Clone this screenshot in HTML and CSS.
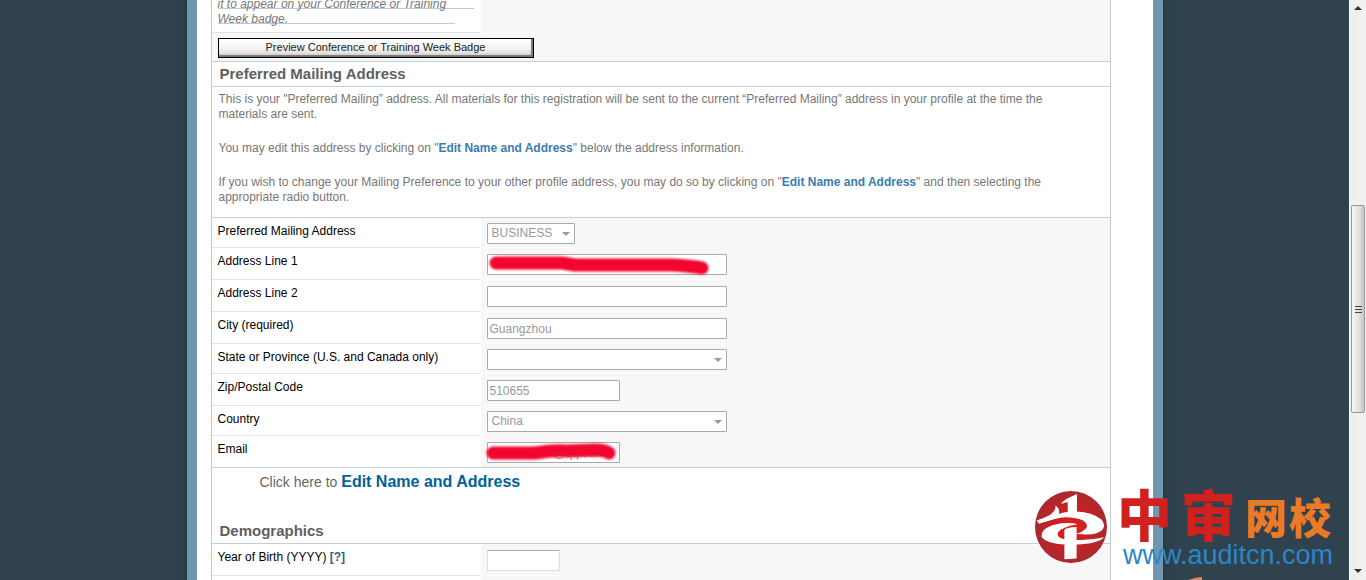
FILE: index.html
```html
<!DOCTYPE html>
<html lang="en">
<head>
<meta charset="utf-8">
<title>Conference Registration</title>
<link rel="stylesheet" href="styles.css">
</head>
<body>
<div class="viewport">
  <div class="backdrop">
    <main class="frame">
      <table class="form">
        <colgroup><col class="col-label"><col></colgroup>
        <tbody>
          <tr>
            <td class="label note"><em class="note-line note-first">it to appear on your Conference or Training</em><em class="note-line note-short">Week badge.</em></td>
            <td class="field"></td>
          </tr>
          <tr><td class="action" colspan="2"><button class="preview" type="button">Preview Conference or Training Week Badge</button></td></tr>
          <tr><th class="section" colspan="2">Preferred Mailing Address</th></tr>
          <tr>
            <td class="intro" colspan="2">
              <p>This is your "Preferred Mailing” address. All materials for this registration will be sent to the current “Preferred Mailing” address in your profile at the time the materials are sent.</p>
              <p>You may edit this address by clicking on "<a href="#edit">Edit Name and Address</a>" below the address information.</p>
              <p>If you wish to change your Mailing Preference to your other profile address, you may do so by clicking on "<a href="#edit">Edit Name and Address</a>" and then selecting the appropriate radio button.</p>
            </td>
          </tr>
          <tr>
            <td class="label"><label for="pref">Preferred Mailing Address</label></td>
            <td class="field has-select"><div class="pick pick-small"><select id="pref" disabled><option>BUSINESS</option></select></div></td>
          </tr>
          <tr>
            <td class="label"><label for="line1">Address Line 1</label></td>
            <td class="field"><div class="masked"><input class="box wide" id="line1" type="text" disabled>
              <svg class="marker" width="240" height="30" viewBox="0 0 240 30" aria-hidden="true"><path d="M9 13H75Q82 14 88 15H185Q204 16 215 18"/></svg></div></td>
          </tr>
          <tr>
            <td class="label"><label for="line2">Address Line 2</label></td>
            <td class="field"><input class="box wide" id="line2" type="text" disabled></td>
          </tr>
          <tr>
            <td class="label"><label for="city">City (required)</label></td>
            <td class="field"><input class="box wide" id="city" type="text" value="Guangzhou" disabled></td>
          </tr>
          <tr>
            <td class="label"><label for="state">State or Province (U.S. and Canada only)</label></td>
            <td class="field has-select"><div class="pick"><select id="state" disabled><option></option></select></div></td>
          </tr>
          <tr>
            <td class="label"><label for="zip">Zip/Postal Code</label></td>
            <td class="field"><input class="box medium" id="zip" type="text" value="510655" disabled></td>
          </tr>
          <tr>
            <td class="label"><label for="country">Country</label></td>
            <td class="field has-select"><div class="pick"><select id="country" disabled><option>China</option></select></div></td>
          </tr>
          <tr>
            <td class="label last"><label for="email">Email</label></td>
            <td class="field last"><div class="masked"><input class="box medium email" id="email" type="text" value="@qq.com" disabled>
              <svg class="marker" width="140" height="30" viewBox="0 0 140 30" aria-hidden="true"><path d="M6 15H48Q66 12 80 13L108 12Q118 12 122 15"/></svg></div></td>
          </tr>
          <tr>
            <td class="edit" colspan="2">Click here to <a href="#edit">Edit Name and Address</a></td>
          </tr>
          <tr><th class="section" colspan="2">Demographics</th></tr>
          <tr>
            <td class="label"><label for="birth">Year of Birth (YYYY)</label> <a class="help" href="#help">[?]</a></td>
            <td class="field"><input class="box year" id="birth" type="text"></td>
          </tr>
          <tr><td class="label">&nbsp;</td><td class="field"></td></tr>
        </tbody>
      </table>
    </main>
  </div>
  <div class="scrollbar" aria-hidden="true">
    <svg class="arrow" width="8" height="5" viewBox="0 0 8 5"><path d="M4 0L8 4H0Z"/></svg>
    <div class="thumb"><i></i><i></i><i></i></div>
    <svg class="arrow arrow-down" width="8" height="5" viewBox="0 0 8 5"><path d="M4 4L0 0H8Z"/></svg>
  </div>
  <div class="brand">
    <svg class="emblem" width="74" height="74" viewBox="29 15 222 224" aria-hidden="true">
      <defs><radialGradient id="disc"><stop offset="0" stop-color="#dc2020"/><stop offset=".55" stop-color="#c72024"/><stop offset="1" stop-color="#a82a2e"/></radialGradient></defs>
      <circle cx="140" cy="127" r="109" fill="url(#disc)"/>
      <g fill="#fff">
        <path d="M112 53Q124 41 138 36L158 27V86L130 88V52Q120 52 112 57Z"/>
        <path d="M36 107Q68 97 81 87Q94 78 93 62Q108 73 103 88Q122 79 155 80Q205 82 232 104Q247 120 234 137Q214 153 176 149Q158 147 142 151Q181 143 188 127Q190 111 165 103Q124 92 91 103L43 117Z"/>
        <path d="M160 119Q115 126 101 143Q92 157 120 164V135Q130 128 157 127V166Q195 168 241 158Q221 178 157 180V222L120 225V180Q66 177 51 157Q48 126 111 116Q139 112 160 119Z"/>
      </g>
    </svg>
    <div class="brand-text">
      <div class="brand-name"><span class="big">中</span><span class="big">审</span><span class="small">网</span><span class="small">校</span></div>
      <div class="brand-url">www.auditcn.com</div>
    </div>
    <svg class="speck" width="16" height="3" viewBox="0 0 16 3" aria-hidden="true"><path d="M0 3Q9 0 14 0V3Z" fill="#e28a68"/></svg>
  </div>
</div>
</body>
</html>
```
FILE: styles.css
```css
* { box-sizing: border-box; }

body {
  margin: 0;
  font-family: "Liberation Sans", Arial, sans-serif;
  font-size: 12px;
  color: #000;
}

a { color: #3a7cb0; font-weight: bold; text-decoration: none; }

.viewport {
  position: relative;
  display: flex;
  height: 100vh;
  overflow: hidden;
}

.backdrop {
  flex: 1;
  display: flex;
  justify-content: center;
  align-items: flex-start;
  background: #2f424e;
  border-right: 1px solid #fff;
}

.frame {
  flex: 0 1 976px;
  padding: 0 42px 0 14px;
  background: #fff;
  border: solid #7097b0;
  border-width: 0 10px;
  box-shadow: 0 0 8px #22323c;
}

.form {
  width: 100%;
  table-layout: fixed;
  border-collapse: separate;
  border-spacing: 0;
  border: solid #c3c8cc;
  border-width: 0 1px;
}

.col-label { width: 269px; }

td, th { padding: 0; vertical-align: top; text-align: left; }

.label {
  padding: 5px 6px;
  line-height: 16px;
  border-bottom: 1px solid #e2e4e6;
  border-right: 1px solid #fff;
}

.field {
  padding: 6px 6px 4px;
  background: #f7f7f7;
  border-bottom: 1px solid #fdfdfd;
}

.has-select { padding: 5px 6px 3px; }

.note { padding: 0 6px 5px; color: #777; border-bottom-color: #e2e4e6; }

.note-line {
  display: block;
  width: 256px;
  height: 15px;
  line-height: 14px;
  background: linear-gradient(#b9ccd8, #b9ccd8) 0 11px / 100% 1px no-repeat;
}

.note-first { margin-top: -3px; }
.note-short { width: 237px; }

.action {
  padding: 5px 6px 3px;
  background: #f7f7f7;
  border-bottom: 1px solid #c2d0d8;
}

.preview {
  display: block;
  width: 316px;
  height: 20px;
  padding: 0 0 2px;
  font: 11px/14px "Liberation Sans", Arial, sans-serif;
  color: #222;
  border: 1px solid #000;
  background: linear-gradient(#fff, #f4f4f2 50%, #d4d2ce);
  box-shadow: inset -2px -2px 1px #777;
}

.section {
  height: 25px;
  padding: 0 8px;
  font-size: 15px;
  line-height: 24px;
  color: #606060;
  border-bottom: 1px solid #c2d0d8;
}

.intro {
  padding: 5px 30px 12px 7px;
  line-height: 15px;
  color: #777;
  border-bottom: 1px solid #c2d0d8;
}

.intro p { margin: 0 0 19px; }
.intro p:last-child { margin: 0; }

.label.last, .field.last { border-bottom-color: #c2d0d8; }

.box, .pick select {
  display: block;
  height: 21px;
  margin: 0;
  padding: 0 2px;
  font: 12px/19px "Liberation Sans", Arial, sans-serif;
  color: #999;
  background: #fff;
  border: 1px solid #aaa;
  border-radius: 1px;
  opacity: 1;
}

.wide { width: 240px; }
.medium { width: 133px; }
.year { width: 73px; border-color: #aaa #ddd #ddd; }
.email { padding-left: 66px; }

.pick { position: relative; width: 240px; }
.pick-small { width: 88px; }
.pick select { width: 100%; padding: 0 4px; appearance: none; }

.pick::after {
  content: "";
  position: absolute;
  right: 5px;
  top: 9px;
  border: solid transparent;
  border-width: 4px 4px 0;
  border-top-color: #999;
}

.masked { position: relative; }

.marker {
  position: absolute;
  left: 0;
  top: -4px;
  overflow: visible;
  fill: none;
  stroke: #f2052f;
  stroke-width: 13px;
  stroke-linecap: round;
  filter: blur(1px);
}

.edit {
  height: 51px;
  padding: 4px 48px;
  font-size: 14px;
  line-height: 20px;
  color: #666;
}

.edit a { font-size: 16px; color: #00629b; }

.help { color: #33617f; }

.scrollbar {
  width: 16px;
  display: grid;
  grid-template-rows: 17px 188fr 208fr 150fr 17px;
  justify-items: center;
  align-items: center;
  background: linear-gradient(90deg, #eee, #f1f1f1);
}

.arrow { grid-row: 1; fill: #333; }
.arrow-down { grid-row: 5; }

.thumb {
  grid-row: 3;
  width: 14px;
  height: 100%;
  display: flex;
  flex-direction: column;
  align-items: center;
  justify-content: center;
  gap: 2px;
  border: 1px solid #989898;
  border-radius: 2px;
  background: linear-gradient(90deg, #f6f6f6, #e6e6e6 50%, #c3c5c7);
}

.thumb i { width: 7px; height: 1px; background: #444; }

.brand {
  position: absolute;
  right: 33px;
  bottom: 12px;
  display: flex;
  align-items: flex-start;
  gap: 9px;
}

.emblem { margin-top: 6px; }

.brand-name {
  display: flex;
  align-items: flex-end;
  height: 58px;
  font-family: "Noto Sans CJK SC", sans-serif;
  font-weight: 900;
}

.big { width: 64px; font-size: 55px; line-height: 60px; color: #d0211f; }
.small { width: 44px; font-size: 42px; line-height: 52px; color: #ea7a25; }

.brand-url {
  font-size: 27px;
  line-height: 26px;
  text-align: right;
  color: #2b86c8;
}

.speck { position: absolute; left: 154px; bottom: -12px; }
```
